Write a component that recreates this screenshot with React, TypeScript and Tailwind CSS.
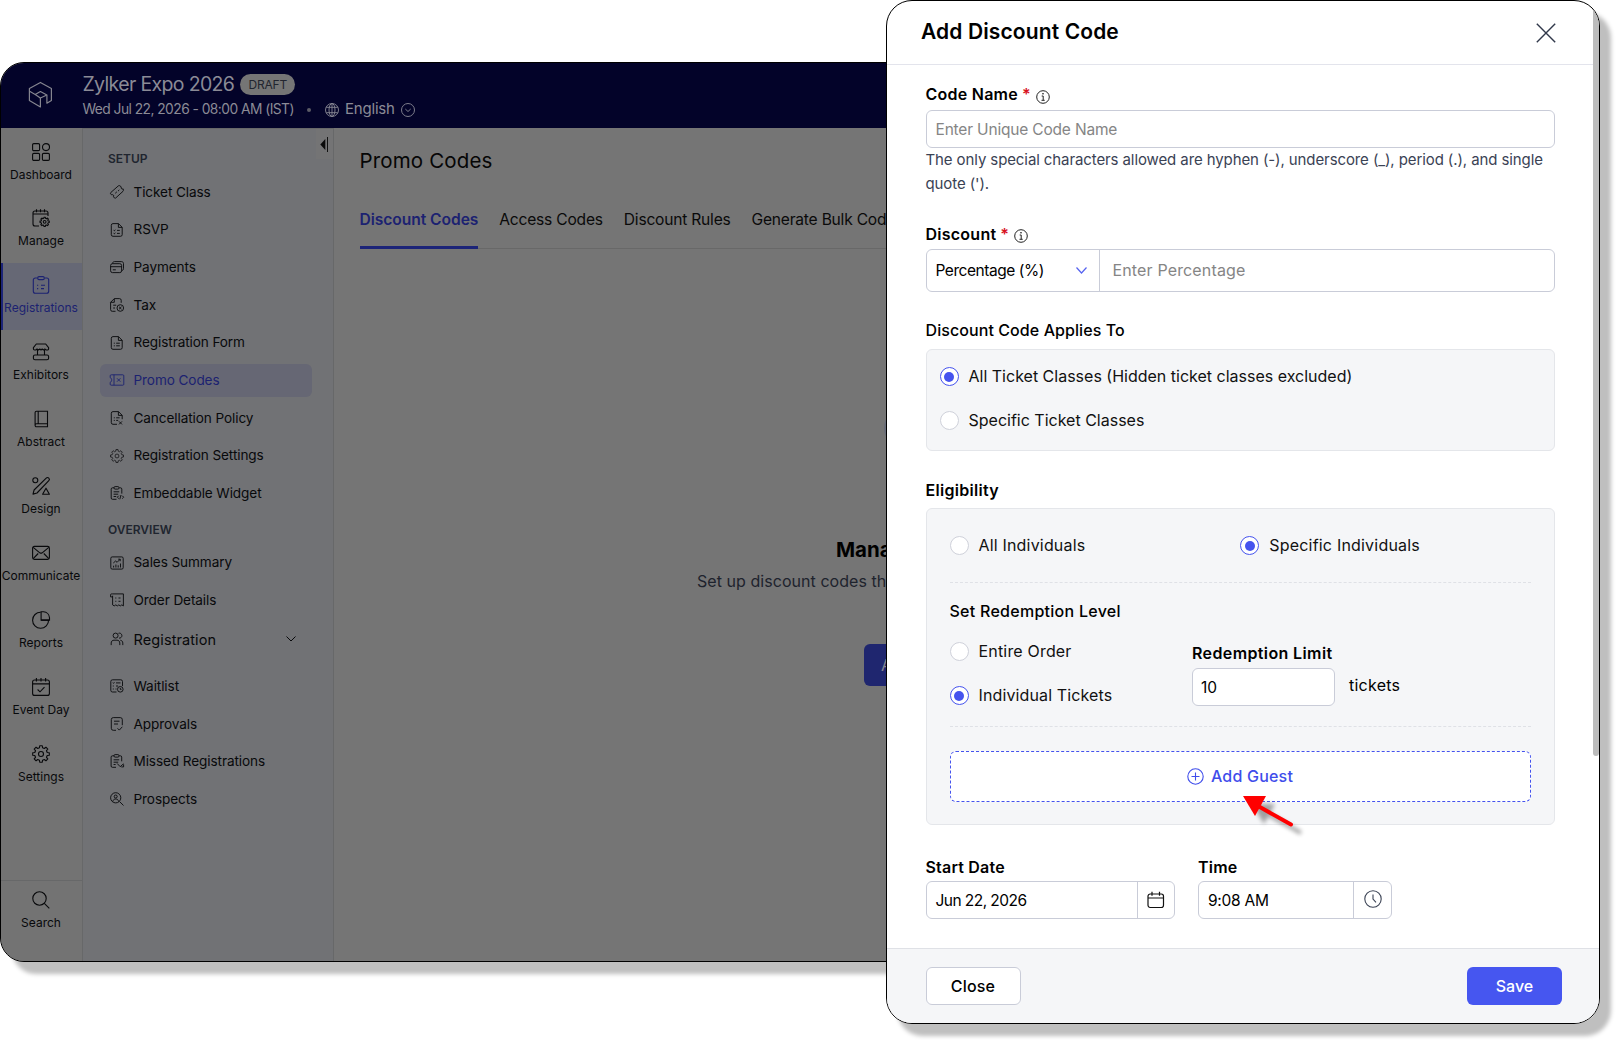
import type { ReactNode } from 'react';
import clsx from 'clsx';

// eight rounded teeth around a small hub
const gearPath = (() => {
  const points: string[] = [];
  for (let i = 0; i < 8; i++) {
    const steps = [
      [-14, 6.4],
      [-9, 8.4],
      [9, 8.4],
      [14, 6.4],
    ];
    for (const [offset, radius] of steps) {
      const a = ((i * 45 + offset) * Math.PI) / 180;
      points.push(`${(9 + radius * Math.sin(a)).toFixed(2)} ${(9 - radius * Math.cos(a)).toFixed(2)}`);
    }
  }
  return `M${points.join('L')}Z`;
})();

function Gear() {
  return (
    <>
      <circle cx="9" cy="9" r="2.5" />
      <path d={gearPath} strokeLinejoin="round" />
    </>
  );
}

const railIcons: Record<string, ReactNode> = {
  Dashboard: (
    <>
      <rect x="0.6" y="0.6" width="7" height="7" rx="1.2" />
      <circle cx="14" cy="4.1" r="3.5" />
      <rect x="0.6" y="10.4" width="7" height="7" rx="1.2" />
      <rect x="10.4" y="10.4" width="7" height="7" rx="1.2" />
    </>
  ),
  Manage: (
    <>
      <path d="M7 17H3a2 2 0 0 1-2-2V4a2 2 0 0 1 2-2h11a2 2 0 0 1 2 2v3M1 5h15M4.5 .3v3M8.5 .3v3M12.5 .3v3" />
      <g transform="translate(7.6 7.8) scale(0.56)" strokeWidth="1.9">
        <Gear />
      </g>
    </>
  ),
  Registrations: (
    <>
      <path d="M5.5 2H3.3a2 2 0 0 0-2 2v11.3a2 2 0 0 0 2 2h11.400a2 2 0 0 0 2-2V4a2 2 0 0 0-2-2h-2.200" />
      <rect x="5.7" y="0.6" width="6.6" height="3" rx="1.3" />
      <path d="M5 9.200h1.200M9 9.200h4M5 12.600h1.200M9 12.600h3" />
    </>
  ),
  Exhibitors: (
    <>
      <path d="M4.300 1h9.400l2.900 3.600v1.200a1.200 1.200 0 0 1-1.200 1.200h-1.200l-1.400-1-1.400 1-1.200-1-1.200 1-1.200-1-1.400 1-1.400-1-1.200 1H2.600A1.200 1.200 0 0 1 1.400 5.800V4.600z" strokeLinejoin="round" />
      <path d="M5.500 7v5M12.500 7v5" />
      <rect x="1.400" y="12" width="15.200" height="4.800" rx="1.600" />
    </>
  ),
  Abstract: (
    <path d="M4.500 1.200h11v12.600h-11a1.400 1.400 0 0 0-1.400 1.400V2.600a1.400 1.400 0 0 1 1.400-1.400zM6.200 1.200v12.600M3.100 15.200a1.400 1.400 0 0 0 1.400 1.500h11v-2.900" />
  ),
  Design: (
    <>
      <circle cx="3.3" cy="3.2" r="2.5" />
      <path d="M14.200 1.100a1.800 1.800 0 0 1 2.600 2.600L5 16l-4 1.100 1.100-4.100zM14 11.200l3.400 6h-6.800z" strokeLinejoin="round" />
    </>
  ),
  Communicate: (
    <>
      <rect x="0.6" y="2.4" width="16.8" height="13" rx="1.8" />
      <path d="M1.200 3.300l6.600 5.500a2 2 0 0 0 2.400 0l6.600-5.500M1.200 14.700l5-5.200M16.800 14.700l-5-5.200" />
    </>
  ),
  Reports: (
    <>
      <path d="M9.100 9.100h7.500A8 8 0 1 1 8.700 1.200" />
      <path d="M9.100 9.100V.7h2.400a6.500 6.500 0 0 1 6 6v2.400z" />
    </>
  ),
  'Event Day': (
    <>
      <rect x="0.6" y="2" width="16.8" height="15.4" rx="2" />
      <path d="M.6 5.900h16.800M4.400 0v3.400M9 0v3.400M13.600 0v3.400M5.600 11.500l2.400 2.300 4.500-4.600" />
    </>
  ),
  Settings: <Gear />,
  Search: (
    <>
      <circle cx="7.5" cy="7.5" r="6.7" />
      <path d="M12.300 12.300l5 5" />
    </>
  ),
};

const menuIcons: Record<string, ReactNode> = {
  'Ticket Class': (
    <path d="M9.700.700l1.600 1.200c-.6 1.400.4 2.500 1.900 2l.2 1.400c0 .4-.1.700-.4 1l-7.200 6.600c-.5.500-1 .4-1.400 0l-.9-1.100c.8-1.400-.5-2.700-1.900-1.900l-.9-1c-.4-.5-.3-1 .1-1.400L8.300.9c.4-.4.9-.5 1.400-.2zM5.200 8.300l1.700-1.500M8 6.100l1.300-1.200" />
  ),
  RSVP: (
    <>
      <path d="M3 .6h5.500l3.700 3.700v7.300a1.700 1.700 0 0 1-1.700 1.700H3a1.700 1.700 0 0 1-1.700-1.700V2.300A1.700 1.700 0 0 1 3 .6zM8.400.7v3.700h3.700" />
      <path d="M3.600 7.300l.7.600 1-1.200M7 7.400h2.800M3.600 10.300l.7.600 1-1.200M7 10.400h2.800" />
    </>
  ),
  Payments: (
    <>
      <rect x="0.6" y="3.7" width="11" height="8.9" rx="1.8" />
      <path d="M2.500 3.500c.1-1.200.9-1.900 2-1.900h7c1.200 0 2 .8 2 2v5c0 1.200-.8 1.900-1.800 2M.6 6.700h11M2.800 9.800h3" />
    </>
  ),
  Tax: (
    <>
      <path d="M5.500 13.300H2.300A1.700 1.700 0 0 1 .6 11.600V4.300L4.300.6h5.200a1.700 1.700 0 0 1 1.700 1.700v2.500M4.300.8v3.500H.7M3.200 7.200h3M3.200 10h1.800" />
      <circle cx="10.3" cy="10" r="3.3" />
      <path d="M9.100 8.800l2.400 2.400M11.500 8.800l-2.400 2.400" />
    </>
  ),
  'Registration Form': (
    <>
      <path d="M3 .6h5.500l3.700 3.700v7.300a1.700 1.700 0 0 1-1.700 1.700H3a1.700 1.700 0 0 1-1.700-1.700V2.300A1.700 1.700 0 0 1 3 .6zM8.400.7v3.700h3.700" />
      <path d="M3.800 7.200h1M6.200 7.200h3.600M3.800 9.800h1M6.200 9.800h3.600" />
    </>
  ),
  'Promo Codes': (
    <>
      <path d="M1.500 1.800h11.300a1 1 0 0 1 1 1v8.400a1 1 0 0 1-1 1H1.200a1 1 0 0 1-1-1V9.300c2-.6 2-4 0-4.600V2.800a1 1 0 0 1 1-1zM4 1.800v10.400" />
      <path d="M7 5.300l3.400 3.400M10.400 5.300L7 8.700" />
    </>
  ),
  'Cancellation Policy': (
    <path d="M7 13.300H3a1.700 1.700 0 0 1-1.700-1.700V2.300A1.700 1.700 0 0 1 3 .6h5.500l3.700 3.700v3.900M8.400.7v3.700h3.700M3.800 6.800h1M6.200 6.800h3.400M3.800 9.400h1M6.200 9.400h2M9 10.400l3 3M12 10.400l-3 3" />
  ),
  'Registration Settings': (
    <g transform="scale(0.778)">
      <Gear />
    </g>
  ),
  'Embeddable Widget': (
    <>
      <path d="M4 1.800H2.500A1.300 1.300 0 0 0 1.200 3.100v8.900a1.300 1.300 0 0 0 1.300 1.300h4M9.300 1.800h1.200a1.300 1.300 0 0 1 1.300 1.300v4.500M3.600 5.800h5.600M3.600 8.200h4.600M3.600 10.500h2.600" />
      <rect x="4" y="0.6" width="5" height="2.5" rx="1.1" />
      <path d="M8.800 9.700l-1.500 1.500 1.500 1.400M12.200 9.700l1.500 1.500-1.500 1.400M11 9l-1.200 4.300" />
    </>
  ),
  'Sales Summary': (
    <>
      <rect x="0.8" y="0.9" width="12.4" height="12.2" rx="1.4" />
      <path d="M3.300 7l2.300-2 1.500 1.300 3-3M8.200 3.200h2v2M3.600 11.500V9.700M5.900 11.500V8.500M8.200 11.500V9.300M10.500 11.500V7.500" />
    </>
  ),
  'Order Details': (
    <path d="M2.600.9h10.800v12l-1.600-1-1.500 1-1.500-1-1.500 1-1.500-1-1.600 1-1.600-1V2.700M2.600.9H1.500a.9.9 0 0 0-.9.900v2.100h2M5.300 5h1M8.500 5h2M5.300 8.300h1M8.500 8.300h2" />
  ),
  Registration: (
    <>
      <circle cx="5.6" cy="3.6" r="2.5" />
      <path d="M8.500 1.300a2.500 2.500 0 1 1 .5 4.800M1.200 13.100V11c0-1.700 1.100-2.800 2.800-2.800h3c1.700 0 2.800 1.100 2.800 2.800v2.100M10.300 8.200c1.500.2 2.500 1.300 2.500 2.800v2.100" />
    </>
  ),
  Waitlist: (
    <>
      <path d="M6.500 13H2.500A1.700 1.700 0 0 1 .8 11.300V2.500A1.700 1.700 0 0 1 2.500.8h8.300a1.700 1.700 0 0 1 1.700 1.700V7M2.800 3.700l.7.700.9-1.200M6 3.900h4.500M2.800 7h1M6 7h2M2.800 10h1M5.500 10h1" />
      <circle cx="10.3" cy="10.3" r="2.8" />
      <path d="M10.300 8.900v1.500h1.200" />
    </>
  ),
  Approvals: (
    <path d="M6 13.300H3.300a2 2 0 0 1-2-2V2.600a2 2 0 0 1 2-2h7a2 2 0 0 1 2 2v5.600M4 4.200h5.500M4 7h4M7.500 11.300l1.800 1.800 3-3.300" />
  ),
  'Missed Registrations': (
    <>
      <path d="M4 1.800H2.400A1.300 1.300 0 0 0 1.100 3.100v8.900a1.300 1.300 0 0 0 1.300 1.300H6M9.200 1.800h1.200a1.300 1.300 0 0 1 1.300 1.300v4.200M3.600 5.800h5.600M3.600 8.200h4.600M3.600 10.500h2" />
      <rect x="4" y="0.6" width="5" height="2.500" rx="1.1" />
      <path d="M7.200 9.500l3 3.200 3.300-2.900M11.300 12.900h2.300v-2.500" />
    </>
  ),
  Prospects: (
    <>
      <circle cx="5.7" cy="5.8" r="5.1" />
      <circle cx="5.7" cy="4.5" r="1.5" />
      <path d="M2.900 9.500c.2-1.700 1.200-2.500 2.800-2.500s2.600.8 2.800 2.500M9.500 9.500l4 4" />
    </>
  ),
};

const railItems = [
  'Dashboard',
  'Manage',
  'Registrations',
  'Exhibitors',
  'Abstract',
  'Design',
  'Communicate',
  'Reports',
  'Event Day',
  'Settings',
];

const setupItems = [
  'Ticket Class',
  'RSVP',
  'Payments',
  'Tax',
  'Registration Form',
  'Promo Codes',
  'Cancellation Policy',
  'Registration Settings',
  'Embeddable Widget',
];

const tabs = ['Discount Codes', 'Access Codes', 'Discount Rules', 'Generate Bulk Cod'];

function RailItem({ name }: { name: string }) {
  const active = name === 'Registrations';
  return (
    <div
      className={clsx(
        'flex h-[66.9px] flex-col items-center border-l-2 pr-[3px] pt-[13.5px]',
        active ? 'border-[#1c2478] bg-[#666875] text-[#1c2271]' : 'border-transparent text-[#08090b]'
      )}
    >
      <svg viewBox="0 0 18 18" className="size-[18px] shrink-0 overflow-visible" fill="none" stroke="currentColor" strokeWidth="1.1">
        {railIcons[name]}
      </svg>
      <span className="mt-[6px] whitespace-nowrap text-[12px] leading-4">{name}</span>
    </div>
  );
}

function MenuItem({ name, children }: { name: string; children?: ReactNode }) {
  const active = name === 'Promo Codes';
  return (
    <div className="flex h-[37.7px] items-center px-[17px]">
      <div
        className={clsx(
          'flex h-[33px] w-[212px] items-center gap-[10px] rounded-[6px] pl-[9.5px]',
          active ? 'bg-[#666774] text-[#1c2271]' : 'text-[#08090b]'
        )}
      >
        <svg viewBox="0 0 14 14" className="size-[14px] shrink-0 overflow-visible" fill="none" stroke="currentColor" strokeWidth="0.9">
          {menuIcons[name]}
        </svg>
        <span
          className={clsx(
            'whitespace-nowrap',
            name === 'Registration' ? 'text-[14.5px] tracking-[0.1px]' : 'text-[13.6px] tracking-[-0.1px]'
          )}
        >
          {name}
        </span>
        {children}
      </div>
    </div>
  );
}

function Radio({ label, checked, className }: { label: string; checked?: boolean; className?: string }) {
  return (
    <div className="flex h-[21px] items-center gap-[10px] text-[16px] leading-[21px] text-[#111]">
      <span
        className={clsx(
          'flex size-[19px] shrink-0 items-center justify-center rounded-full border bg-white',
          checked ? 'border-[#4553ee]' : 'border-[#cfd1da]'
        )}
      >
        {checked && <span className="size-[10px] rounded-full bg-[#4553ee]" />}
      </span>
      <span className={clsx('whitespace-nowrap', className)}>{label}</span>
    </div>
  );
}

function RequiredLabel({ children }: { children: ReactNode }) {
  return (
    <div className="flex h-[21px] items-center text-[16px] font-semibold leading-[21px] tracking-[0.25px]">
      {children}
      <span className="ml-[4px] text-[#d8121f]">*</span>
      <svg viewBox="0 0 14 14" className="ml-[5px] mt-1 size-[14px]" fill="none" stroke="#222" strokeWidth="1">
        <circle cx="7" cy="7" r="6.3" />
        <path d="M5.700 6h1.500v4.300M5.500 10.300h3.200" />
        <circle cx="7" cy="3.8" r="0.4" fill="#222" />
      </svg>
    </div>
  );
}

function EventHeader() {
  return (
    <header className="flex h-[65px] shrink-0 bg-[#030329] text-[#8b8b96]">
      <svg viewBox="0 0 23 25" className="ml-[28px] mt-[19px] h-[25px] w-[23px] overflow-visible" fill="none" stroke="#85858f" strokeWidth="1.2" strokeLinejoin="round">
        <path d="M11.400 16v9L.4 18.500V6.500L11.400.4l11 6.100v12l-4.500 2.700v-8" />
        <path d="M.6 9.300l5.600 3.200 5.200-3 6.500 3.500-6.500 3-5.200-3.500" />
      </svg>
      <div className="ml-[30.5px] pt-[8.5px]">
        <div className="flex h-[26px] items-center">
          <span className="whitespace-nowrap text-[19.5px] tracking-[-0.65px]">Zylker Expo 2026</span>
          <span className="ml-[6px] flex h-[21px] w-[55px] items-center justify-center rounded-full bg-[#757575] text-[12px] tracking-[-0.2px] text-[#22252f]">
            DRAFT
          </span>
        </div>
        <div className="-mt-[1px] flex h-[26px] items-center text-[13.8px]">
          <span className="whitespace-nowrap tracking-[-0.54px]">Wed Jul 22, 2026 - 08:00 AM (IST)</span>
          <span className="ml-[13px] size-[4px] rounded-full bg-[#5c5c66]" />
          <svg viewBox="0 0 14 14" className="ml-[14px] size-[14px]" fill="none" stroke="currentColor" strokeWidth="0.9">
            <circle cx="7" cy="7" r="6.5" />
            <ellipse cx="7" cy="7" rx="3" ry="6.5" />
            <path d="M7 .5v13M1.200 4.300h11.600M1.200 9.700h11.600" />
          </svg>
          <span className="ml-[6px] text-[15px] tracking-[-0.2px]">English</span>
          <svg viewBox="0 0 14 14" className="ml-[6px] size-[14px]" fill="none" stroke="currentColor" strokeWidth="0.9">
            <circle cx="7" cy="7" r="6.5" />
            <path d="M4.300 6l2.700 2.500L9.700 6" />
          </svg>
        </div>
      </div>
    </header>
  );
}

function SetupMenu() {
  return (
    <aside className="relative w-[252px] shrink-0 border-x border-t border-[#676869] bg-[#717275]">
      <div className="absolute right-0 top-0 flex h-[30px] w-[17px] items-center bg-[#747475] pl-[4px]">
        <svg viewBox="0 0 8 15" className="h-[15px] w-2">
          <path d="M5.300 2v11L.3 7.500z" fill="#0a0a0a" />
          <path d="M7.500 0v15" stroke="#111" />
        </svg>
      </div>
      <h3 className="ml-[25px] mt-[20.5px] h-[18px] text-[12px] font-semibold leading-[18px] text-[#20252f]">SETUP</h3>
      <div className="mt-[5.5px]">
        {setupItems.map((name) => (
          <MenuItem key={name} name={name} />
        ))}
      </div>
      <h3 className="ml-[25px] mt-[9px] h-[18px] text-[12px] font-semibold leading-[18px] text-[#20252f]">OVERVIEW</h3>
      <div className="mt-[4.5px]">
        <MenuItem name="Sales Summary" />
        <MenuItem name="Order Details" />
        <div className="mb-[9px] mt-[1.5px]">
          <MenuItem name="Registration">
            <svg viewBox="0 0 10 6" className="ml-auto mr-[16px] h-[6px] w-[10px]" fill="none" stroke="currentColor" strokeWidth="1">
              <path d="M.5.5L5 5 9.500.5" />
            </svg>
          </MenuItem>
        </div>
        <MenuItem name="Waitlist" />
        <MenuItem name="Approvals" />
        <MenuItem name="Missed Registrations" />
        <MenuItem name="Prospects" />
      </div>
    </aside>
  );
}

function PromoCodes() {
  return (
    <main className="relative min-w-0 flex-1 overflow-hidden bg-[#757575]">
      <h1 className="ml-[25.5px] mt-[18.5px] h-[28px] text-[20.5px] leading-[28px] tracking-[0.15px] text-[#060606]">Promo Codes</h1>
      <nav className="ml-[25.5px] mt-[32.5px] flex h-[42px] gap-[21px] border-b border-[#686868] text-[15.6px] text-[#0a0a0a]">
        {tabs.map((tab, i) => (
          <span
            key={tab}
            className={clsx(
              'h-[42px] whitespace-nowrap pt-[1px] leading-[24px]',
              i === 0
                ? 'rounded-t-[2px] border-b-[3px] border-[#1c2478] font-semibold tracking-[-0.05px] text-[#1c2271]'
                : 'tracking-[-0.22px]'
            )}
          >
            {tab}
          </span>
        ))}
      </nav>
      <svg viewBox="0 0 40 40" className="absolute left-[549px] top-[280px] size-10">
        <circle cx="20" cy="20" r="19" fill="#676b78" />
      </svg>
      <section className="mt-[286px] whitespace-nowrap">
        <h2 className="ml-[502px] h-[30px] text-[20.5px] font-bold leading-[30px] text-black">Mana</h2>
        <p className="ml-[363px] mt-[4px] h-[24px] text-[16px] leading-[24px] tracking-[0.05px] text-[#1e232d]">Set up discount codes th</p>
        <button className="ml-[530px] mt-[51px] h-[42px] w-[180px] rounded-[6px] bg-[#1f266f] px-[17px] text-left text-[16px] text-[#85858f]">
          A
        </button>
      </section>
    </main>
  );
}

function Pointer() {
  return (
    <svg viewBox="0 0 64 44" className="absolute left-[354px] top-[792px] h-11 w-16 overflow-visible">
      <g className="blur-[2px]" opacity="0.35" transform="translate(9 8)">
        <path d="M2 3h23L14 23z" />
        <path d="M18 13l33 19" stroke="#000" strokeWidth="4" />
      </g>
      <path d="M2 3h23L14 23z" fill="#f00" />
      <path d="M17 13l33 18.500" stroke="#f00" strokeWidth="4" strokeLinecap="round" />
    </svg>
  );
}

function DiscountDialog() {
  return (
    <div
      role="dialog"
      className="absolute left-[886px] top-0 flex h-[1024px] w-[714px] flex-col overflow-hidden rounded-[26px] border border-black bg-white text-black"
    >
      <div className="flex h-[64px] shrink-0 items-center justify-between border-b border-[#e3e4ec] pl-[34px] pr-[43.5px]">
        <h2 className="-mt-[1px] text-[21px] font-semibold tracking-[0.12px]">Add Discount Code</h2>
        <svg viewBox="0 0 20 20" className="mt-[1px] size-5" stroke="#30384a" strokeWidth="1.4">
          <path d="M.8.800l18.400 18.400M19.200.800L.8 19.200" />
        </svg>
      </div>

      <div className="pl-[38.5px] pr-[44px] pt-[19px] text-[16px] leading-[21px]">
        <RequiredLabel>Code Name</RequiredLabel>
        <div className="mt-[5px] flex h-[38px] items-center rounded-[6px] border border-[#c9ccd8] px-[9px] text-[15.5px] tracking-[-0.18px] text-[#858585]">
          Enter Unique Code Name
        </div>
        <p className="whitespace-nowrap text-[15px] leading-[24px] tracking-[-0.1px] text-[#3a4254]">
          The only special characters allowed are hyphen (-), underscore (_), period (.), and single
          <br />
          quote (').
        </p>

        <div className="mt-[27.5px]">
          <RequiredLabel>Discount</RequiredLabel>
        </div>
        <div className="mt-[4.5px] flex h-[43px] rounded-[6px] border border-[#c9ccd8]">
          <div className="flex w-[173px] items-center justify-between border-r border-[#c9ccd8] pl-[9px] pr-[12px] text-[15.5px] tracking-[-0.45px]">
            Percentage (%)
            <svg viewBox="0 0 11 7" className="h-[7px] w-[11px]" fill="none" stroke="#5562f0" strokeWidth="1.2">
              <path d="M.5.500l5 5.500 5-5.500" />
            </svg>
          </div>
          <div className="flex items-center pl-[13px] text-[16px] tracking-[0.15px] text-[#858585]">Enter Percentage</div>
        </div>

        <h3 className="mt-[28px] font-medium tracking-[0.08px]">Discount Code Applies To</h3>
        <div className="mt-[8px] flex h-[102px] flex-col gap-[23px] rounded-[6px] border border-[#e4e6ea] bg-[#f5f6f8] pl-[13px] pt-[16px]">
          <Radio label="All Ticket Classes (Hidden ticket classes excluded)" checked />
          <Radio label="Specific Ticket Classes" />
        </div>

        <h3 className="mt-[28.5px] font-semibold tracking-[0.3px]">Eligibility</h3>
        <div className="mt-[7.5px] h-[317px] rounded-[6px] border border-[#e4e6ea] bg-[#f5f6f8] px-[23px] pt-[26px]">
          <div className="grid grid-cols-2">
            <Radio label="All Individuals" className="tracking-[0.18px]" />
            <Radio label="Specific Individuals" className="tracking-[0.2px]" checked />
          </div>
          <div className="mt-[26px] border-t border-dashed border-[#dfe1e6]" />
          <h4 className="mt-[17.5px] font-medium tracking-[0.27px]">Set Redemption Level</h4>
          <div className="mt-[19.5px] flex">
            <div className="flex w-[242.5px] flex-col gap-[23px]">
              <Radio label="Entire Order" className="tracking-[0.18px]" />
              <Radio label="Individual Tickets" className="tracking-[0.13px]" checked />
            </div>
            <div>
              <div className="mt-[2px] font-semibold tracking-[0.38px]">Redemption Limit</div>
              <div className="mt-[4px] flex items-center gap-[14px]">
                <div className="flex h-[38px] w-[143px] items-center rounded-[6px] border border-[#c9ccd8] bg-white pl-[8px] text-[15.5px]">
                  10
                </div>
                <span className="-mt-[4px] tracking-[0.25px]">tickets</span>
              </div>
            </div>
          </div>
          <div className="mt-[20px] border-t border-dashed border-[#dfe1e6]" />
          <button className="mt-[24px] flex h-[51px] w-full items-center justify-center gap-[6.5px] rounded-[6px] border-[1.5px] border-dashed border-[#4553ee] bg-white font-medium tracking-[0.2px] text-[#3f4deb]">
            <svg viewBox="0 0 17 17" className="size-[17px]" fill="none" stroke="currentColor" strokeWidth="1.1">
              <circle cx="8.5" cy="8.5" r="7.7" />
              <path d="M8.500 4.500v8M4.500 8.500h8" />
            </svg>
            Add Guest
          </button>
        </div>

        <div className="mt-[31.5px] flex gap-[23.5px]">
          <div>
            <h3 className="font-semibold tracking-[0.2px]">Start Date</h3>
            <div className="mt-[3.5px] flex h-[38px] w-[249px] items-center rounded-[6px] border border-[#c9ccd8] text-[15.5px]">
              <span className="flex-1 pl-[9px] tracking-[-0.55px]">Jun 22, 2026</span>
              <span className="flex h-full w-[37px] items-center justify-center border-l border-[#c9ccd8]">
                <svg viewBox="0 0 18 18" className="size-[18px]" fill="none" stroke="#111" strokeWidth="1.2">
                  <rect x="1" y="3" width="15.5" height="13.5" rx="2.2" />
                  <path d="M1 7h15.500M5 .8v4M12.500.8v4" />
                </svg>
              </span>
            </div>
          </div>
          <div>
            <h3 className="font-semibold tracking-[0.2px]">Time</h3>
            <div className="mt-[3.5px] flex h-[38px] w-[194px] items-center rounded-[6px] border border-[#c9ccd8] text-[15.5px]">
              <span className="flex-1 pl-[9px] tracking-[-0.25px]">9:08 AM</span>
              <span className="flex h-full w-[38px] items-center justify-center border-l border-[#c9ccd8]">
                <svg viewBox="0 0 18 18" className="-mt-[2px] size-[18px]" fill="none" stroke="#3a4254" strokeWidth="1.1">
                  <circle cx="9" cy="9" r="8.2" />
                  <path d="M9 4.500V9l3 3.300" />
                </svg>
              </span>
            </div>
          </div>
        </div>
      </div>

      <div className="mt-auto flex h-[75px] shrink-0 justify-between border-t border-[#dfe1e6] bg-[#f5f6f8] pl-[38.5px] pr-[37px] pt-[18px] text-[16px] font-medium">
        <button className="h-[38px] w-[95px] rounded-[6px] border border-[#c9ccd8] bg-white tracking-[0.2px]">Close</button>
        <button className="h-[38px] w-[95px] rounded-[6px] bg-[#4656f0] text-white">Save</button>
      </div>

      <div className="absolute right-0 top-0 h-[755px] w-[6px] rounded-b-[3px] bg-[#bcbcbc]" />
      <Pointer />
    </div>
  );
}

export default function App() {
  return (
    <div className="relative h-[1040px] w-[1616px] overflow-hidden bg-white pt-[62px] font-['Inter',sans-serif]">
      <div className="flex h-[900px] w-[1300px] flex-col overflow-hidden rounded-[24px] border border-black bg-[#757575] shadow-[12px_12px_4px_#bfbfbf]">
        <EventHeader />
        <div className="flex min-h-0 flex-1">
          <nav className="flex w-[81px] shrink-0 flex-col bg-[#737373] pt-[1px]">
            {railItems.map((name) => (
              <RailItem key={name} name={name} />
            ))}
            <div className="mt-auto h-[81px] border-t border-[#676869]">
              <div className="-mt-[4px]">
                <RailItem name="Search" />
              </div>
            </div>
          </nav>
          <SetupMenu />
          <PromoCodes />
        </div>
      </div>
      <div className="absolute left-[886px] top-0 h-[1024px] w-[714px] rounded-[26px] shadow-[11px_12px_4px_#bfbfbf]" />
      <DiscountDialog />
    </div>
  );
}
